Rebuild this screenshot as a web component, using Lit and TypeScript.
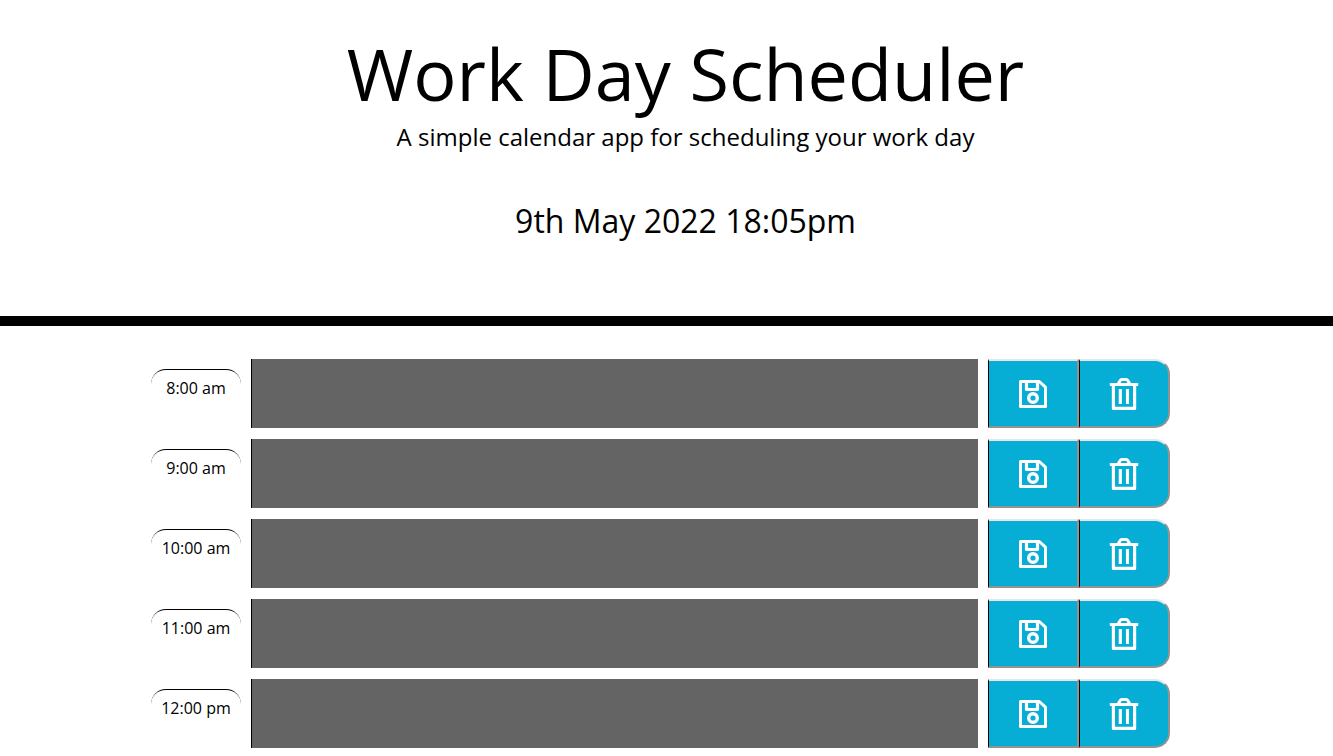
import { LitElement, html, css, svg } from "lit";
import { customElement, property } from "lit/decorators.js";

const saveIcon = svg`
  <svg class="icon" viewBox="0 0 36 37" aria-hidden="true">
    <path d="M5.5 6.5H24.2L30.5 12.2V31.5H5.5Z" fill="none" stroke="currentColor" stroke-width="3" stroke-linejoin="round"/>
    <path d="M11.5 6.5V14.5H22.5V6.5" fill="none" stroke="currentColor" stroke-width="3.2" stroke-linejoin="round"/>
    <circle cx="18" cy="23" r="4.3" fill="none" stroke="currentColor" stroke-width="3.4"/>
  </svg>`;

const trashIcon = svg`
  <svg class="icon" viewBox="0 0 36 37" aria-hidden="true">
    <path d="M3.8 9.5H32.2" fill="none" stroke="currentColor" stroke-width="3"/>
    <path d="M11.8 9.5L14.2 5.5Q14.8 4.5 15.8 4.5H20.2Q21.2 4.5 21.8 5.5L24.2 9.5" fill="none" stroke="currentColor" stroke-width="3" stroke-linejoin="round"/>
    <path d="M7.4 9.5V33.4H28.6V9.5" fill="none" stroke="currentColor" stroke-width="3.2" stroke-linejoin="round"/>
    <path d="M14.3 14V29M21.5 14V29" fill="none" stroke="currentColor" stroke-width="3.1"/>
  </svg>`;

@customElement("time-block")
class TimeBlock extends LitElement {
  @property() hour = "";

  static styles = css`
    :host {
      display: grid;
      grid-template-columns: 90px minmax(0, 1fr) auto;
      column-gap: 10px;
      height: 69px;
    }
    .hour {
      margin-top: 10px;
      padding-top: 6px;
      border-top: 1px solid #000;
      border-bottom: 1px solid #fff;
      border-radius: 15px;
      font-size: 16px;
      line-height: 24px;
      text-align: center;
    }
    .entry {
      box-sizing: border-box;
      width: 100%;
      height: 100%;
      margin: 0;
      padding: 8px;
      border: 0;
      border-left: 1px solid #000;
      border-radius: 0;
      background: #646464;
      color: #fff;
      font: inherit;
      resize: none;
    }
    .actions {
      display: flex;
    }
    .action {
      display: flex;
      align-items: center;
      justify-content: center;
      box-sizing: border-box;
      width: 91px;
      padding: 0;
      border: 2px outset #e6e6e6;
      border-left: 1px solid #000;
      border-radius: 0;
      background: #06aed5;
      color: #fff;
      cursor: pointer;
    }
    .action.remove {
      border-radius: 0 15px 15px 0;
    }
    .icon {
      display: block;
      width: 36px;
      height: 37px;
    }
  `;

  render() {
    return html`
      <label class="hour" for="entry">${this.hour}</label>
      <textarea class="entry" id="entry"></textarea>
      <div class="actions">
        <button class="action" type="button" aria-label="Save">${saveIcon}</button>
        <button class="action remove" type="button" aria-label="Delete">${trashIcon}</button>
      </div>
    `;
  }
}

@customElement("app-root")
class AppRoot extends LitElement {
  private hours = ["8:00 am", "9:00 am", "10:00 am", "11:00 am", "12:00 pm"];

  static styles = css`
    :host {
      display: block;
      background: #fff;
      color: #000;
      font-family: "Open Sans", "Noto Sans", sans-serif;
      font-size: 16px;
    }
    .header {
      padding: 25px 0 71px 38px;
      border-bottom: 10px solid #000;
      text-align: center;
    }
    .title,
    .lead,
    .date {
      margin: 0;
      font-weight: 400;
    }
    .title {
      font-size: 72px;
      line-height: 96px;
    }
    .lead {
      font-size: 24px;
      line-height: 32px;
    }
    .date {
      margin-top: 44px;
      font-size: 32px;
      line-height: 48px;
    }
    .schedule {
      display: flex;
      flex-direction: column;
      gap: 11px;
      padding: 33px 163px 8px 151px;
    }
  `;

  render() {
    return html`
      <header class="header">
        <h1 class="title">Work Day Scheduler</h1>
        <p class="lead">A simple calendar app for scheduling your work day</p>
        <p class="date">9th May 2022 18:05pm</p>
      </header>
      <main class="schedule">
        ${this.hours.map((hour) => html`<time-block .hour=${hour}></time-block>`)}
      </main>
    `;
  }
}
